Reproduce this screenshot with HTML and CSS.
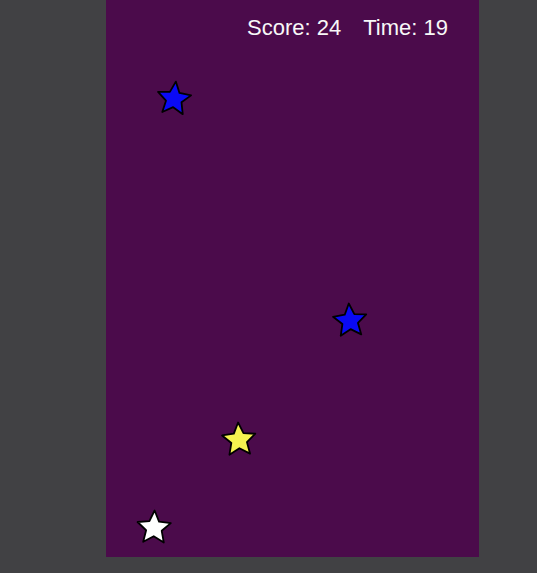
FILE: index.html
```html
<!DOCTYPE html>
<html lang="en">
<head>
<meta charset="utf-8">
<title>Star Catcher</title>
<link rel="stylesheet" href="styles.css">
</head>
<body>
<svg class="defs" width="0" height="0" aria-hidden="true">
  <defs>
    <polygon id="star-shape" points="0,-17.5 4.82,-6.63 16.64,-5.41 7.8,2.53 10.29,14.16 0,8.2 -10.29,14.16 -7.8,2.53 -16.64,-5.41 -4.82,-6.63"/>
  </defs>
</svg>
<main class="board">
  <header class="hud">
    <span class="hud-item">Score: 24</span>
    <span class="hud-item">Time: 19</span>
  </header>
  <svg class="star star--blue tilt-a" style="left:48px;top:79px" viewBox="-20 -20 40 40"><use href="#star-shape"/></svg>
  <svg class="star star--blue tilt-b" style="left:224px;top:301px" viewBox="-20 -20 40 40"><use href="#star-shape"/></svg>
  <svg class="star star--yellow tilt-c" style="left:113px;top:420px" viewBox="-20 -20 40 40"><use href="#star-shape"/></svg>
  <svg class="star star--white tilt-d" style="left:28px;top:508px" viewBox="-20 -20 40 40"><use href="#star-shape"/></svg>
</main>
</body>
</html>
```
FILE: styles.css
```css
html, body {
  margin: 0;
  padding: 0;
}

body {
  background: #414144;
  min-height: 100vh;
  display: flex;
  align-items: flex-start;
  font-family: "Liberation Sans", Arial, Helvetica, sans-serif;
}

.defs {
  position: absolute;
  width: 0;
  height: 0;
  overflow: hidden;
}

.board {
  position: relative;
  margin-left: 106px;
  width: 373px;
  height: 557px;
  background: #4b0b4b;
  overflow: hidden;
}

.hud {
  display: flex;
  justify-content: flex-end;
  gap: 22px;
  padding: 15px 31px 0 0;
  color: #f8f8f8;
  font-size: 22px;
  line-height: 25px;
}

.star {
  position: absolute;
  width: 40px;
  height: 40px;
  overflow: visible;
}

.star use {
  stroke: #000000;
  stroke-width: 1.8;
  stroke-linejoin: round;
}

.star--blue use { fill: #0a0af5; }
.star--yellow use { fill: #f6f350; }
.star--white use { fill: #ffffff; }

.tilt-a { transform: rotate(6deg); }
.tilt-b { transform: rotate(-4deg); }
.tilt-c { transform: rotate(-3deg); }
.tilt-d { transform: rotate(2deg); }
```
